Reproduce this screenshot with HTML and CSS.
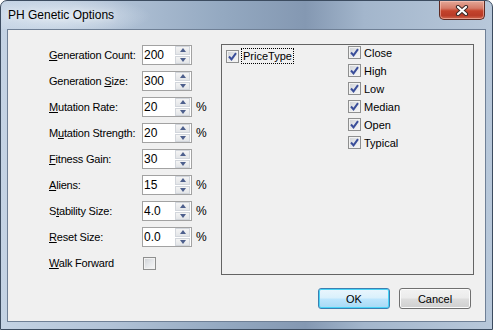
FILE: index.html
```html
<!DOCTYPE html>
<html lang="en">
<head>
  <meta charset="UTF-8" />
  <title>PH Genetic Options</title>
  <link rel="stylesheet" href="styles.css">
</head>
<body>

  <div class="window">
    <!-- Title bar -->
    <div class="titlebar">
      <span class="title">PH Genetic Options</span>
      <div class="close-btn">
        <svg width="14" height="11" viewBox="0 0 14 11">
          <path d="M3 2 L11 9 M11 2 L3 9" stroke="#3b2a28" stroke-width="4.2" stroke-linecap="round" />
          <path d="M3 2 L11 9 M11 2 L3 9" stroke="#ffffff" stroke-width="2.2" stroke-linecap="round" />
        </svg>
      </div>
    </div>

    <div class="client">
      <div class="main">
        <!-- Option fields -->
        <div class="fields">
          <label class="field-label"><u>G</u>eneration Count:</label>
          <div class="spin"><span class="spin-value">200</span><span class="spin-btns"><span class="spin-up"></span><span class="spin-down"></span></span></div>
          <span class="unit"></span>

          <label class="field-label">Generation <u>S</u>ize:</label>
          <div class="spin"><span class="spin-value">300</span><span class="spin-btns"><span class="spin-up"></span><span class="spin-down"></span></span></div>
          <span class="unit"></span>

          <label class="field-label"><u>M</u>utation Rate:</label>
          <div class="spin"><span class="spin-value">20</span><span class="spin-btns"><span class="spin-up"></span><span class="spin-down"></span></span></div>
          <span class="unit">%</span>

          <label class="field-label">M<u>u</u>tation Strength:</label>
          <div class="spin"><span class="spin-value">20</span><span class="spin-btns"><span class="spin-up"></span><span class="spin-down"></span></span></div>
          <span class="unit">%</span>

          <label class="field-label"><u>F</u>itness Gain:</label>
          <div class="spin"><span class="spin-value">30</span><span class="spin-btns"><span class="spin-up"></span><span class="spin-down"></span></span></div>
          <span class="unit"></span>

          <label class="field-label"><u>A</u>liens:</label>
          <div class="spin"><span class="spin-value">15</span><span class="spin-btns"><span class="spin-up"></span><span class="spin-down"></span></span></div>
          <span class="unit">%</span>

          <label class="field-label">S<u>t</u>ability Size:</label>
          <div class="spin"><span class="spin-value">4.0</span><span class="spin-btns"><span class="spin-up"></span><span class="spin-down"></span></span></div>
          <span class="unit">%</span>

          <label class="field-label"><u>R</u>eset Size:</label>
          <div class="spin"><span class="spin-value">0.0</span><span class="spin-btns"><span class="spin-up"></span><span class="spin-down"></span></span></div>
          <span class="unit">%</span>

          <label class="field-label"><u>W</u>alk Forward</label>
          <div class="check-cell"><span class="check"></span></div>
          <span class="unit"></span>
        </div>

        <!-- Price type panel -->
        <div class="panel">
          <div class="price-type">
            <span class="check checked">
              <svg width="11" height="11" viewBox="0 0 11 11"><path d="M2 5.5 L4.5 8.3 L9 2.2" stroke="#3a4e9a" stroke-width="2" fill="none" /></svg>
            </span>
            <span class="focus-label">PriceType</span>
          </div>
          <ul class="price-list">
            <li><span class="check checked"><svg width="11" height="11" viewBox="0 0 11 11"><path d="M2 5.5 L4.5 8.3 L9 2.2" stroke="#3a4e9a" stroke-width="2" fill="none" /></svg></span>Close</li>
            <li><span class="check checked"><svg width="11" height="11" viewBox="0 0 11 11"><path d="M2 5.5 L4.5 8.3 L9 2.2" stroke="#3a4e9a" stroke-width="2" fill="none" /></svg></span>High</li>
            <li><span class="check checked"><svg width="11" height="11" viewBox="0 0 11 11"><path d="M2 5.5 L4.5 8.3 L9 2.2" stroke="#3a4e9a" stroke-width="2" fill="none" /></svg></span>Low</li>
            <li><span class="check checked"><svg width="11" height="11" viewBox="0 0 11 11"><path d="M2 5.5 L4.5 8.3 L9 2.2" stroke="#3a4e9a" stroke-width="2" fill="none" /></svg></span>Median</li>
            <li><span class="check checked"><svg width="11" height="11" viewBox="0 0 11 11"><path d="M2 5.5 L4.5 8.3 L9 2.2" stroke="#3a4e9a" stroke-width="2" fill="none" /></svg></span>Open</li>
            <li><span class="check checked"><svg width="11" height="11" viewBox="0 0 11 11"><path d="M2 5.5 L4.5 8.3 L9 2.2" stroke="#3a4e9a" stroke-width="2" fill="none" /></svg></span>Typical</li>
          </ul>
        </div>
      </div>

      <!-- Dialog buttons -->
      <div class="buttons">
        <button class="btn btn-default">OK</button>
        <button class="btn">Cancel</button>
      </div>
    </div>
  </div>

</body>
</html>
```

FILE: styles.css
```css
/* Basic Reset */
* {
  box-sizing: border-box;
}

body {
  margin: 0;
  background: #ffffff;
  font-family: "Liberation Sans", Arial, sans-serif;
  font-size: 11px;
  color: #000000;
}

/* Window frame */
.window {
  width: 493px;
  height: 330px;
  border: 1px solid #3c4c60;
  border-radius: 7px 7px 0 0;
  background: linear-gradient(to right, #c4d3e4 0%, #b2c3d7 22%, #94a9c1 45%, #8498b2 62%, #a3b6cc 74%, #b8c8da 100%);
  overflow: hidden;
}

.titlebar {
  height: 28px;
  display: flex;
  align-items: center;
  padding-left: 7px;
  background: radial-gradient(ellipse 90px 20px at 60px 15px, rgba(230, 238, 246, 0.8), rgba(230, 238, 246, 0));
}

.title {
  font-size: 12px;
  color: #000000;
  text-shadow: 0 0 6px rgba(255, 255, 255, 0.9);
}

.close-btn {
  margin-left: auto;
  margin-right: 7px;
  align-self: flex-start;
  width: 46px;
  height: 19px;
  border: 1px solid #5e2a22;
  border-top: none;
  border-radius: 0 0 5px 5px;
  background: linear-gradient(to bottom, #e4a898 0%, #d57b68 40%, #c4432c 55%, #b93b27 80%, #d0684e 100%);
  box-shadow: inset 0 0 0 1px rgba(255, 210, 200, 0.5);
  display: flex;
  align-items: center;
  justify-content: center;
}

/* Client area */
.client {
  margin: 0 6px;
  width: 479px;
  height: 293px;
  border: 1px solid #6f8096;
  background: #f0f0f0;
}

.main {
  display: flex;
  padding-left: 41px;
}

.fields {
  width: 172px;
  padding-top: 15px;
  display: grid;
  grid-template-columns: 93px 50px 1fr;
  grid-auto-rows: 20px;
  row-gap: 6px;
  align-items: center;
}

.field-label {
  letter-spacing: -0.2px;
  white-space: nowrap;
}

.unit {
  padding-left: 4px;
  font-size: 12px;
}

/* Spin box */
.spin {
  width: 50px;
  height: 20px;
  border: 1px solid #a2a2a2;
  background: #ffffff;
  display: flex;
  align-items: center;
}

.spin-value {
  flex: 1;
  padding-left: 1px;
  font-size: 12px;
}

.spin-btns {
  width: 15px;
  height: 18px;
  margin-right: 1px;
  display: flex;
  flex-direction: column;
  gap: 1px;
}

.spin-up,
.spin-down {
  flex: 1;
  border: 1px solid #d2d6dc;
  background: linear-gradient(to bottom, #f4f4f4, #e3e5e8);
  display: flex;
  align-items: center;
  justify-content: center;
}

.spin-up::after {
  content: "";
  border-left: 3.5px solid transparent;
  border-right: 3.5px solid transparent;
  border-bottom: 4px solid #4d5f8c;
}

.spin-down::after {
  content: "";
  border-left: 3.5px solid transparent;
  border-right: 3.5px solid transparent;
  border-top: 4px solid #4d5f8c;
}

/* Check boxes */
.check-cell {
  display: flex;
  align-items: center;
  padding-left: 1px;
}

.check {
  width: 13px;
  height: 13px;
  flex: none;
  border: 1px solid #8e8f8f;
  background: linear-gradient(135deg, #cdd0d4 0%, #e5e7ea 50%, #f8f8f8 100%);
  box-shadow: inset 0 0 0 1px #f2f2f2;
  display: flex;
  align-items: center;
  justify-content: center;
}

.check svg {
  display: block;
}

/* Price type panel */
.panel {
  margin-top: 14px;
  width: 253px;
  height: 231px;
  border: 1px solid #646464;
  display: flex;
  padding-left: 4px;
}

.price-type {
  width: 122px;
  height: 16px;
  margin-top: 3px;
  display: flex;
  align-items: center;
}

.focus-label {
  margin-left: 2px;
  padding: 0 1px;
  height: 16px;
  line-height: 14px;
  border: 1px dotted #000000;
}

.price-list {
  list-style-type: none;
  margin: 0;
  padding: 0;
}

.price-list li {
  height: 15px;
  margin-bottom: 3px;
  display: flex;
  align-items: center;
  gap: 3px;
}

/* Dialog buttons */
.buttons {
  margin-top: 13px;
  padding-right: 14px;
  display: flex;
  justify-content: flex-end;
  gap: 9px;
}

.btn {
  width: 72px;
  height: 21px;
  padding: 0;
  border: 1px solid #707070;
  border-radius: 3px;
  background: linear-gradient(to bottom, #f2f2f2 0%, #ebebeb 48%, #dddddd 52%, #cfcfcf 100%);
  box-shadow: inset 0 0 0 1px #fbfbfb;
  font-family: "Liberation Sans", Arial, sans-serif;
  font-size: 11px;
  color: #000000;
}

.btn-default {
  border-color: #3c7fb1;
  background: linear-gradient(to bottom, #eaf6fd 0%, #d9f0fc 48%, #bee6fd 52%, #a7d9f5 100%);
  box-shadow: inset 0 0 0 1px #48d4f7;
}
```
